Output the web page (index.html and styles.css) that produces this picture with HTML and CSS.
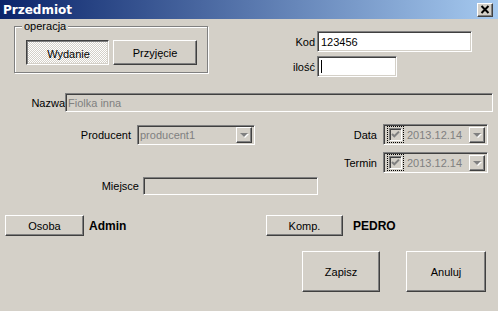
FILE: index.html
```html
<!DOCTYPE html>
<html lang="pl">
<head>
  <meta charset="UTF-8">
  <title>Przedmiot</title>
  <link rel="stylesheet" href="styles.css">
</head>
<body>
  <div class="window">
    <div class="titlebar">
      <span class="title">Przedmiot</span>
      <span class="close-btn raised">
        <svg width="10" height="9" viewBox="0 0 10 9"><path d="M1.5 1 L8.5 8 M8.5 1 L1.5 8" stroke="#000" stroke-width="2" fill="none"/></svg>
      </span>
    </div>

    <div class="top">
      <div class="group">
        <span class="group-label">operacja</span>
        <div class="toggle-row">
          <button class="btn pressed btn-wyd">Wydanie</button>
          <button class="btn raised btn-prz">Przyjęcie</button>
        </div>
      </div>
      <div class="code-fields">
        <span class="lbl">Kod</span>
        <div class="field white kod">123456</div>
        <span class="lbl">ilość</span>
        <div class="field white ilosc"><span class="caret"></span></div>
      </div>
    </div>

    <div class="row nazwa-row">
      <span class="lbl nazwa-lbl">Nazwa</span>
      <div class="field disabled nazwa">Fiolka inna</div>
    </div>

    <div class="middle">
      <div class="middle-left">
        <div class="row prod-row">
          <span class="lbl prod-lbl">Producent</span>
          <div class="field disabled combo prod">
            <span class="combo-text">producent1</span>
            <span class="drop raised"><span class="arrow"></span></span>
          </div>
        </div>
        <div class="row miejsce-row">
          <span class="lbl miejsce-lbl">Miejsce</span>
          <div class="field disabled miejsce"></div>
        </div>
      </div>
      <div class="dates">
        <span class="lbl">Data</span>
        <div class="field disabled combo date">
          <span class="focus"><span class="check"><svg width="9" height="9" viewBox="0 0 9 9"><path d="M1 4 L3.3 6.3 L8 1.6" stroke="#808080" stroke-width="2" fill="none"/></svg></span></span>
          <span class="combo-text">2013.12.14</span>
          <span class="drop raised"><span class="arrow"></span></span>
        </div>
        <span class="lbl">Termin</span>
        <div class="field disabled combo date">
          <span class="focus"><span class="check"><svg width="9" height="9" viewBox="0 0 9 9"><path d="M1 4 L3.3 6.3 L8 1.6" stroke="#808080" stroke-width="2" fill="none"/></svg></span></span>
          <span class="combo-text">2013.12.14</span>
          <span class="drop raised"><span class="arrow"></span></span>
        </div>
      </div>
    </div>

    <div class="person-row">
      <div class="person">
        <button class="btn raised btn-osoba">Osoba</button>
        <span class="who">Admin</span>
      </div>
      <button class="btn raised btn-komp">Komp.</button>
      <span class="who pedro">PEDRO</span>
    </div>

    <div class="actions">
      <button class="btn raised btn-zapisz">Zapisz</button>
      <button class="btn raised btn-anuluj">Anuluj</button>
    </div>
  </div>
</body>
</html>
```

FILE: styles.css
```css
* {
  box-sizing: border-box;
}
body {
  margin: 0;
  font-family: "Liberation Sans", Arial, sans-serif;
  font-size: 11px;
  color: #000;
  background-color: #D4D0C8;
}
.window {
  width: 498px;
  height: 311px;
  background-color: #D4D0C8;
  overflow: hidden;
}
.titlebar {
  height: 19px;
  display: flex;
  align-items: center;
  justify-content: space-between;
  padding: 0 5px 0 3px;
  background: linear-gradient(to right, #0A246A, #A6CAF0);
}
.title {
  color: #fff;
  font-family: "DejaVu Sans", sans-serif;
  font-weight: bold;
  font-size: 12px;
}
.raised {
  background-color: #D4D0C8;
  border: 1px solid;
  border-color: #fff #404040 #404040 #fff;
  box-shadow: inset -1px -1px 0 #808080, inset 1px 1px 0 #D4D0C8;
}
.close-btn {
  width: 16px;
  height: 14px;
  display: flex;
  align-items: center;
  justify-content: center;
}
.btn {
  font: inherit;
  color: #000;
  padding: 0;
  display: flex;
  align-items: center;
  justify-content: center;
}
.pressed {
  border: 1px solid;
  border-color: #404040 #fff #fff #404040;
  box-shadow: inset 1px 1px 0 #808080, inset -1px -1px 0 #D4D0C8;
  background-color: #fff;
  background-image: repeating-conic-gradient(#D4D0C8 0 25%, #fff 0 50%);
  background-size: 2px 2px;
  padding: 2px 0 0 2px;
}

/* top block */
.top {
  height: 59px;
  display: flex;
  align-items: flex-start;
}
.group {
  position: relative;
  margin: 7px 0 0 14px;
  width: 194px;
  height: 47px;
  border: 1px solid #808080;
  box-shadow: 1px 1px 0 #fff, inset 1px 1px 0 #fff;
  padding: 13px 0 0 11px;
}
.group-label {
  position: absolute;
  top: -7px;
  left: 7px;
  padding: 0 2px;
  line-height: 13px;
  background-color: #D4D0C8;
}
.toggle-row {
  display: flex;
  gap: 4px;
}
.btn-wyd {
  width: 83px;
  height: 25px;
}
.btn-prz {
  width: 84px;
  height: 25px;
}
.code-fields {
  margin: 12px 0 0 67px;
  display: grid;
  grid-template-columns: 40px auto;
  column-gap: 2px;
  row-gap: 4px;
  align-items: center;
}
.lbl {
  text-align: right;
  white-space: nowrap;
}
.field {
  border: 1px solid;
  border-color: #808080 #fff #fff #808080;
  box-shadow: inset 1px 1px 0 #404040, inset -1px -1px 0 #D4D0C8;
  display: flex;
  align-items: center;
  padding: 0 0 0 2px;
}
.white {
  background-color: #fff;
}
.disabled {
  background-color: #D4D0C8;
  color: #808080;
}
.kod {
  width: 155px;
  height: 21px;
  padding-left: 3px;
}
.ilosc {
  width: 80px;
  height: 21px;
  padding-left: 3px;
}
.caret {
  width: 1px;
  height: 13px;
  background-color: #000;
}

/* rows */
.row {
  display: flex;
  align-items: center;
}
.nazwa-row {
  margin-top: 15px;
}
.nazwa-lbl {
  width: 65px;
}
.nazwa {
  width: 428px;
  height: 19px;
}
.middle {
  display: flex;
  align-items: flex-start;
}
.middle-left {
  width: 340px;
}
.prod-row {
  margin-top: 13px;
}
.prod-lbl {
  width: 131px;
  margin-right: 6px;
}
.combo {
  padding: 0 2px 0 2px;
}
.combo-text {
  flex: 1;
}
.prod {
  width: 118px;
  height: 20px;
}
.drop {
  width: 16px;
  height: 100%;
  max-height: 16px;
  display: flex;
  align-items: center;
  justify-content: center;
}
.arrow {
  width: 0;
  height: 0;
  border-left: 4px solid transparent;
  border-right: 4px solid transparent;
  border-top: 4px solid #808080;
  filter: drop-shadow(1px 1px 0 #fff);
}
.miejsce-row {
  margin-top: 32px;
}
.miejsce-lbl {
  width: 139px;
  margin-right: 4px;
}
.miejsce {
  width: 175px;
  height: 18px;
}
.dates {
  margin-top: 12px;
  display: grid;
  grid-template-columns: 37px auto;
  column-gap: 6px;
  row-gap: 7px;
  align-items: center;
}
.date {
  width: 105px;
  height: 21px;
}
.focus {
  border: 1px dotted #000;
  padding: 1px;
  margin: 0 3px 0 1px;
  display: flex;
}
.check {
  width: 13px;
  height: 13px;
  border: 1px solid;
  border-color: #808080 #fff #fff #808080;
  box-shadow: inset 1px 1px 0 #404040, inset -1px -1px 0 #D4D0C8;
  display: flex;
  align-items: center;
  justify-content: center;
}

/* bottom */
.person-row {
  margin-top: 20px;
  display: flex;
  align-items: center;
}
.person {
  width: 261px;
  margin-left: 5px;
  display: flex;
  align-items: center;
}
.btn-osoba {
  width: 79px;
  height: 21px;
}
.who {
  font-weight: bold;
  font-size: 12px;
  margin-left: 5px;
}
.btn-komp {
  width: 77px;
  height: 21px;
}
.pedro {
  margin-left: 10px;
}
.actions {
  margin-top: 15px;
  display: flex;
  justify-content: flex-end;
  gap: 26px;
  padding-right: 12px;
}
.btn-zapisz {
  width: 78px;
  height: 41px;
}
.btn-anuluj {
  width: 80px;
  height: 41px;
}
```
